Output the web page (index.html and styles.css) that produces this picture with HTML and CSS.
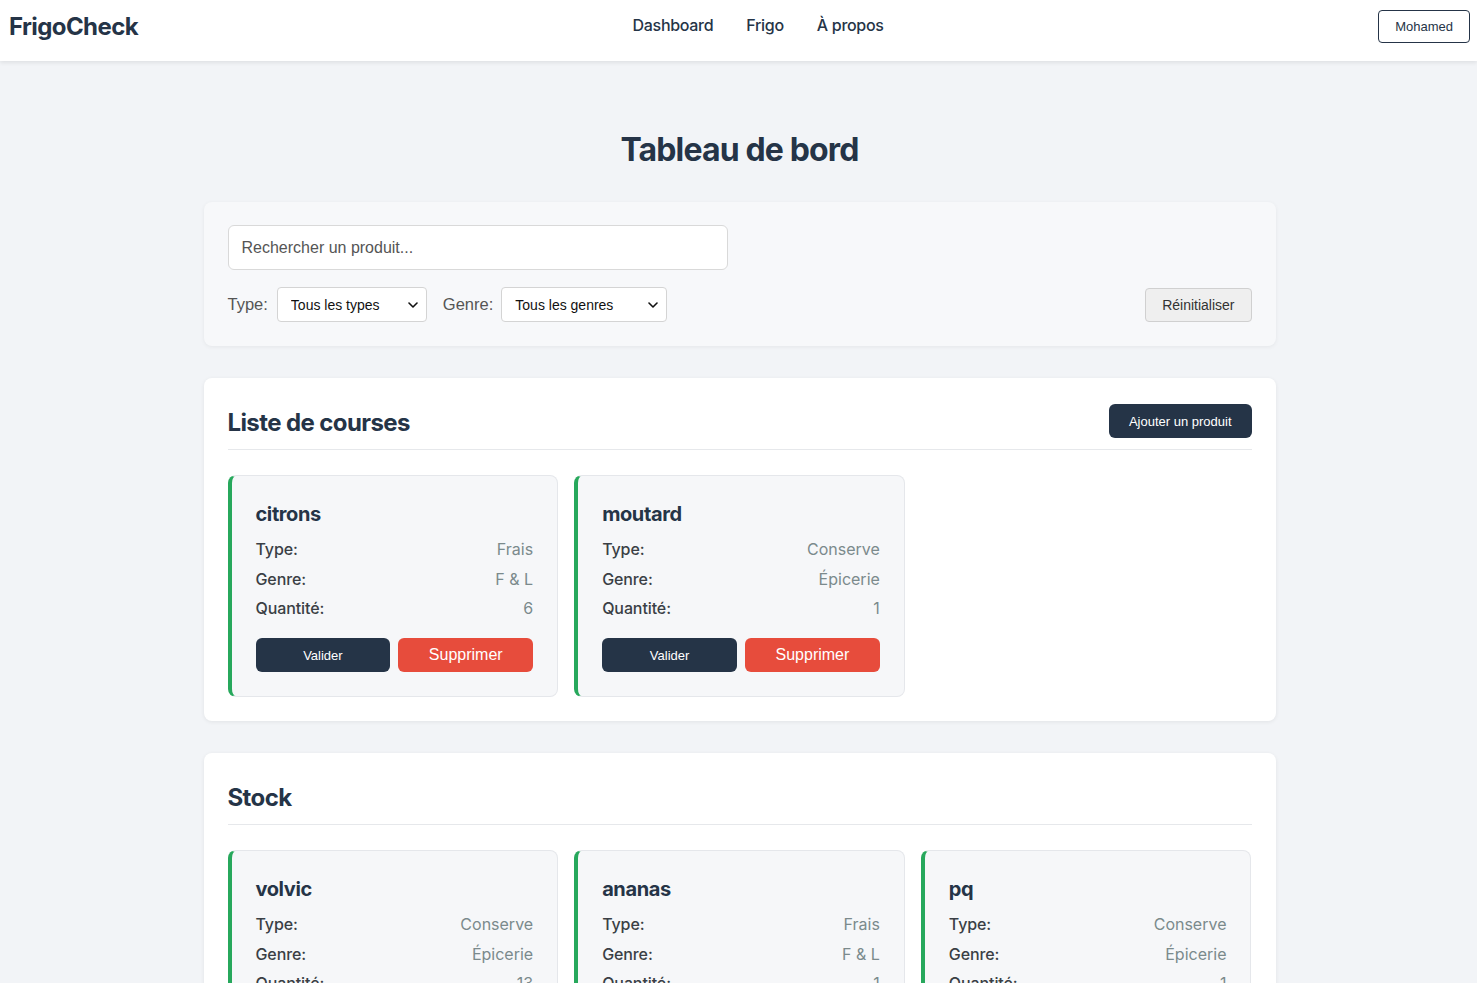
FILE: index.html
```html
<!DOCTYPE html>
<html lang="fr">
<head>
<meta charset="utf-8">
<title>FrigoCheck</title>
<link rel="stylesheet" href="styles.css">
</head>
<body>
<header class="topbar">
  <div class="logo">FrigoCheck</div>
  <nav class="nav">
    <a href="#">Dashboard</a>
    <a href="#">Frigo</a>
    <a href="#">À propos</a>
  </nav>
  <button class="user-btn">Mohamed</button>
</header>

<main class="container">
  <h1 class="page-title">Tableau de bord</h1>

  <section class="filters">
    <input class="search" type="text" placeholder="Rechercher un produit...">
    <div class="filter-row">
      <div class="filter-group">
        <label class="filter-label">Type:</label>
        <span class="select-wrap select-type">
          <select class="select"><option>Tous les types</option></select>
          <svg class="chev" viewBox="0 0 10 6" width="10" height="6"><path d="M1 1l4 4 4-4" fill="none" stroke="#111" stroke-width="1.6" stroke-linecap="round" stroke-linejoin="round"/></svg>
        </span>
        <label class="filter-label genre-label">Genre:</label>
        <span class="select-wrap select-genre">
          <select class="select"><option>Tous les genres</option></select>
          <svg class="chev" viewBox="0 0 10 6" width="10" height="6"><path d="M1 1l4 4 4-4" fill="none" stroke="#111" stroke-width="1.6" stroke-linecap="round" stroke-linejoin="round"/></svg>
        </span>
      </div>
      <button class="reset-btn">Réinitialiser</button>
    </div>
  </section>

  <section class="panel">
    <div class="panel-head">
      <h2 class="panel-title">Liste de courses</h2>
      <button class="add-btn">Ajouter un produit</button>
    </div>
    <div class="grid">
      <div class="card">
        <h3 class="card-title">citrons</h3>
        <div class="row"><span class="k">Type:</span><span class="v">Frais</span></div>
        <div class="row"><span class="k">Genre:</span><span class="v">F &amp; L</span></div>
        <div class="row"><span class="k">Quantité:</span><span class="v">6</span></div>
        <div class="actions">
          <button class="btn btn-dark">Valider</button>
          <button class="btn btn-red">Supprimer</button>
        </div>
      </div>
      <div class="card">
        <h3 class="card-title">moutard</h3>
        <div class="row"><span class="k">Type:</span><span class="v">Conserve</span></div>
        <div class="row"><span class="k">Genre:</span><span class="v">Épicerie</span></div>
        <div class="row"><span class="k">Quantité:</span><span class="v">1</span></div>
        <div class="actions">
          <button class="btn btn-dark">Valider</button>
          <button class="btn btn-red">Supprimer</button>
        </div>
      </div>
    </div>
  </section>

  <section class="panel">
    <div class="panel-head">
      <h2 class="panel-title">Stock</h2>
    </div>
    <div class="grid">
      <div class="card">
        <h3 class="card-title">volvic</h3>
        <div class="row"><span class="k">Type:</span><span class="v">Conserve</span></div>
        <div class="row"><span class="k">Genre:</span><span class="v">Épicerie</span></div>
        <div class="row"><span class="k">Quantité:</span><span class="v">13</span></div>
        <div class="actions">
          <button class="btn btn-dark">Consommer</button>
          <button class="btn btn-red">Supprimer</button>
        </div>
      </div>
      <div class="card">
        <h3 class="card-title">ananas</h3>
        <div class="row"><span class="k">Type:</span><span class="v">Frais</span></div>
        <div class="row"><span class="k">Genre:</span><span class="v">F &amp; L</span></div>
        <div class="row"><span class="k">Quantité:</span><span class="v">1</span></div>
        <div class="actions">
          <button class="btn btn-dark">Consommer</button>
          <button class="btn btn-red">Supprimer</button>
        </div>
      </div>
      <div class="card">
        <h3 class="card-title">pq</h3>
        <div class="row"><span class="k">Type:</span><span class="v">Conserve</span></div>
        <div class="row"><span class="k">Genre:</span><span class="v">Épicerie</span></div>
        <div class="row"><span class="k">Quantité:</span><span class="v">1</span></div>
        <div class="actions">
          <button class="btn btn-dark">Consommer</button>
          <button class="btn btn-red">Supprimer</button>
        </div>
      </div>
    </div>
  </section>
</main>
</body>
</html>
```

FILE: styles.css
```css
* { box-sizing: border-box; }

html, body {
  margin: 0;
  padding: 0;
}

body {
  background: #f2f4f7;
  font-family: Inter, "Liberation Sans", Arial, sans-serif;
  color: #253447;
}

.topbar {
  height: 61px;
  background: #ffffff;
  display: flex;
  align-items: center;
  justify-content: space-between;
  padding: 0 7px 0 9px;
  box-shadow: 0 2px 4px rgba(0, 0, 0, 0.08);
  position: relative;
}

.logo {
  font-size: 24px;
  font-weight: 700;
  color: #253447;
  letter-spacing: -0.6px;
  margin-top: -8px;
}

.nav {
  display: flex;
  gap: 33px;
  margin-top: -11px;
}

.nav a {
  font-size: 16px;
  font-weight: 500;
  letter-spacing: -0.3px;
  color: #253447;
  text-decoration: none;
}

.user-btn {
  height: 33px;
  padding: 0 16px;
  background: #fff;
  border: 1px solid #253447;
  border-radius: 4px;
  font-family: "Liberation Sans", Arial, sans-serif;
  font-size: 13px;
  color: #253447;
  margin-top: -9px;
}

.container {
  width: 1072px;
  margin: 0 auto;
  padding-bottom: 40px;
  position: relative;
  left: 1px;
}

.page-title {
  margin: 70px 0 33px;
  font-size: 32px;
  line-height: 38px;
  font-weight: 700;
  letter-spacing: -0.85px;
  text-align: center;
  color: #253447;
}

.filters {
  background: #f7f8fa;
  border-radius: 8px;
  padding: 23px 24px 24px;
  box-shadow: 0 1px 4px rgba(0, 0, 0, 0.06);
  margin-bottom: 32px;
}

.search {
  display: block;
  width: 500px;
  height: 45px;
  border: 1px solid #d9d9d9;
  border-radius: 6px;
  background: #fff;
  padding: 0 13px;
  font-family: "Liberation Sans", Arial, sans-serif;
  font-size: 16px;
  color: #333;
}

.search::placeholder { color: #555; }

.filter-row {
  margin-top: 17px;
  display: flex;
  align-items: center;
  justify-content: space-between;
}

.filter-group {
  display: flex;
  align-items: center;
}

.filter-label {
  font-family: "Liberation Sans", Arial, sans-serif;
  font-size: 16.5px;
  color: #555;
  margin-right: 9px;
}

.genre-label { margin-left: 16px; margin-right: 8px; }

.select-wrap {
  position: relative;
  display: inline-block;
}

.select-type .select { width: 150px; }
.select-genre .select { width: 166px; }

.select {
  appearance: none;
  -webkit-appearance: none;
  height: 35px;
  border: 1px solid #d4d4d4;
  border-radius: 4px;
  background: #fff;
  padding: 0 13px;
  font-family: "Liberation Sans", Arial, sans-serif;
  font-size: 14px;
  color: #111;
  display: block;
}

.chev {
  position: absolute;
  right: 9px;
  top: 15px;
  pointer-events: none;
}

.reset-btn {
  height: 34px;
  padding: 0 16px;
  background: #efefef;
  border: 1px solid #d0d0d0;
  border-radius: 4px;
  font-family: "Liberation Sans", Arial, sans-serif;
  font-size: 14px;
  color: #333;
}

.panel {
  background: #fff;
  border-radius: 8px;
  padding: 24px;
  box-shadow: 0 1px 4px rgba(0, 0, 0, 0.07);
  margin-bottom: 32px;
}

.panel-head {
  display: flex;
  align-items: center;
  justify-content: space-between;
  min-height: 38px;
  padding-bottom: 9px;
  border-bottom: 1px solid #e6e8eb;
  margin-bottom: 25px;
  box-sizing: content-box;
}

.panel-title {
  margin: 0;
  font-size: 24px;
  line-height: 40px;
  font-weight: 700;
  letter-spacing: -0.6px;
  color: #253447;
}

.panel-head .panel-title { margin-top: 1px; margin-bottom: -3px; }

.add-btn {
  height: 34px;
  padding: 0 20px;
  background: #253447;
  color: #fff;
  border: none;
  border-radius: 6px;
  font-family: "Liberation Sans", Arial, sans-serif;
  font-size: 13px;
}

.grid {
  display: grid;
  grid-template-columns: repeat(3, 1fr);
  gap: 16px;
}

.card {
  background: #f6f7f9;
  border: 1px solid #e5e7eb;
  border-left: 4px solid #27a85c;
  border-radius: 8px;
  padding: 24px 24px 24px 24px;
}

.card-title {
  margin: 0 0 9px;
  font-size: 20px;
  line-height: 28px;
  font-weight: 700;
  letter-spacing: -0.4px;
  color: #253447;
}

.row {
  display: flex;
  justify-content: space-between;
  font-size: 16px;
  line-height: 24px;
  margin-bottom: 5.5px;
}

.k {
  font-weight: 500;
  color: #3a3f45;
  letter-spacing: -0.1px;
}

.v {
  color: #7b8a8c;
}

.actions {
  display: flex;
  gap: 8px;
  margin-top: 18px;
}

.btn {
  flex: 1;
  height: 34px;
  border: none;
  border-radius: 6px;
  color: #fff;
  font-family: "Liberation Sans", Arial, sans-serif;
}

.btn-dark {
  background: #253447;
  font-size: 13px;
}

.btn-red {
  background: #e74c3c;
  font-size: 16px;
}
```
